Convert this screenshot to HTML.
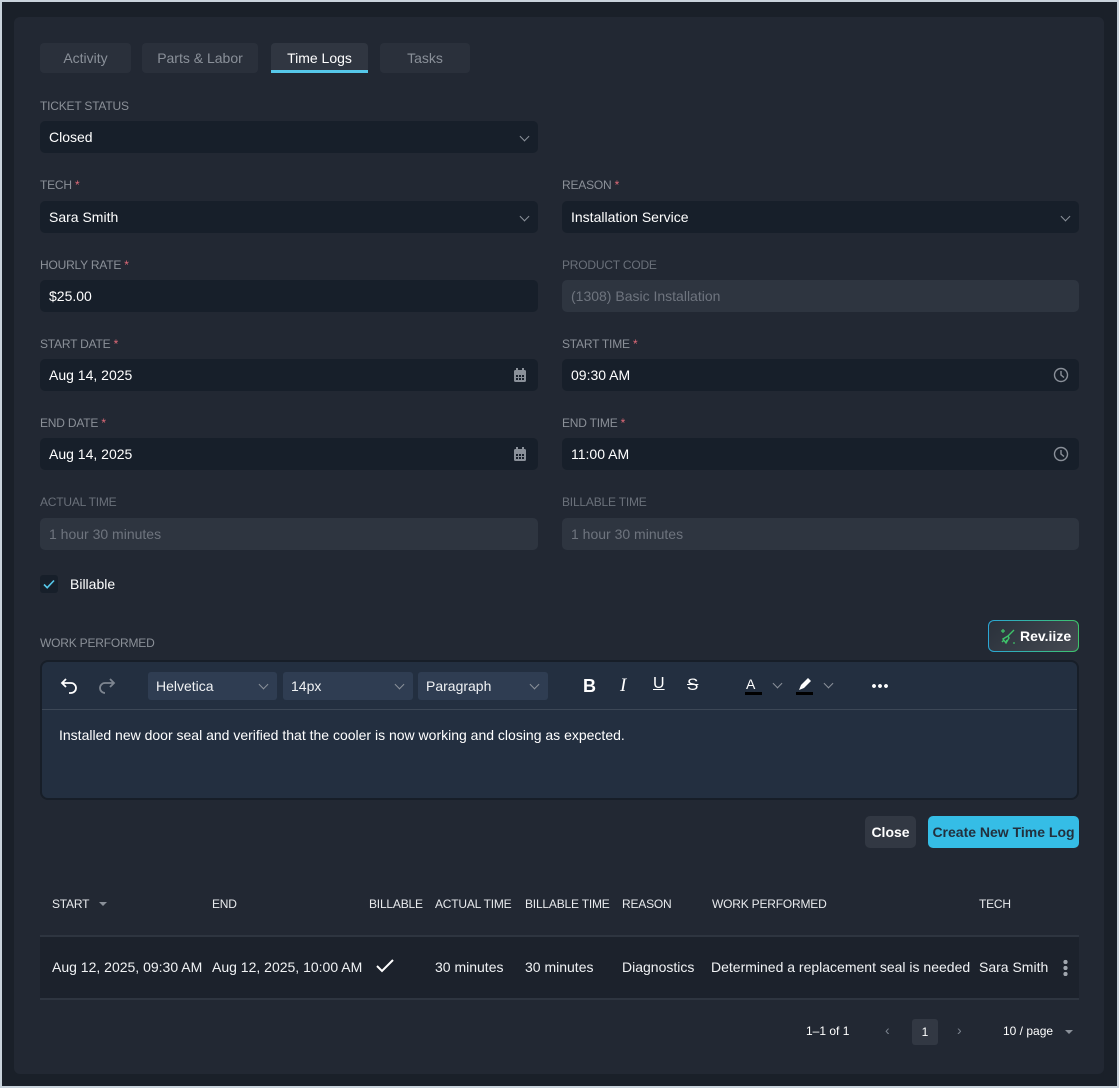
<!DOCTYPE html>
<html><head><meta charset="utf-8"><style>
*{box-sizing:border-box;margin:0;padding:0}
body{width:1119px;height:1088px;background:#c9d3dc;font-family:"Liberation Sans",sans-serif;position:relative;overflow:hidden}
.frame{position:absolute;left:2px;top:2px;width:1115px;height:1084px;background:#1a2029}
.card{position:absolute;left:14px;top:17px;width:1090px;height:1057px;background:#222833;border-radius:6px}
.a{position:absolute}
.tab{position:absolute;top:43px;height:30px;background:#2a303b;border-radius:4px;color:#8a9099;font-size:14px;text-align:center;line-height:30px}
.lbl{position:absolute;font-size:12px;color:#8b9098;letter-spacing:-0.2px}
.lbl.dis{color:#6a707a}
.req{color:#e06a78}
.inp{position:absolute;height:32px;background:#171f2a;border-radius:5px;color:#fff;font-size:14px;line-height:32px;padding-left:9px}
.inp.dis{background:#2e3540;color:#6e747e}
.chev{position:absolute;right:10px;top:12px;width:7px;height:7px;border-right:1.5px solid #8a9099;border-bottom:1.5px solid #8a9099;transform:rotate(45deg)}
.th{position:absolute;top:897px;font-size:12px;color:#e8eaed;letter-spacing:-0.2px}
.td{position:absolute;top:959px;font-size:14px;color:#f0f2f4}
.sel{position:absolute;top:672px;height:28px;background:#2f3d52;border-radius:3px;color:#f0f2f4;font-size:14px;line-height:28px;padding-left:8px}
.sel .chev{top:9px}
</style></head><body>
<div class="frame"></div>
<div class="card"></div>

<div class="tab" style="left:40px;width:91px">Activity</div>
<div class="tab" style="left:142px;width:116px">Parts &amp; Labor</div>
<div class="tab" style="left:271px;width:97px;background:#303641;color:#fff">Time Logs<div class="a" style="left:0;bottom:0;width:97px;height:3px;background:#56c8ea"></div></div>
<div class="tab" style="left:380px;width:90px">Tasks</div>

<div class="lbl" style="left:40px;top:99px">TICKET STATUS</div>
<div class="inp" style="left:40px;top:121px;width:498px">Closed<div class="chev"></div></div>

<div class="lbl" style="left:40px;top:178px">TECH <span class="req">*</span></div>
<div class="inp" style="left:40px;top:201px;width:498px">Sara Smith<div class="chev"></div></div>
<div class="lbl" style="left:562px;top:178px">REASON <span class="req">*</span></div>
<div class="inp" style="left:562px;top:201px;width:517px">Installation Service<div class="chev"></div></div>

<div class="lbl" style="left:40px;top:258px">HOURLY RATE <span class="req">*</span></div>
<div class="inp" style="left:40px;top:280px;width:498px">$25.00</div>
<div class="lbl dis" style="left:562px;top:258px">PRODUCT CODE</div>
<div class="inp dis" style="left:562px;top:280px;width:517px">(1308) Basic Installation</div>

<div class="lbl" style="left:40px;top:337px">START DATE <span class="req">*</span></div>
<div class="inp" style="left:40px;top:359px;width:498px">Aug 14, 2025
<svg class="a" style="right:11px;top:9px" width="14" height="15" viewBox="0 0 14 15"><rect x="1" y="2" width="12" height="12" rx="1.5" fill="#8a9099"/><rect x="3" y="0" width="2" height="3" fill="#8a9099"/><rect x="9" y="0" width="2" height="3" fill="#8a9099"/><g fill="#171f2a"><rect x="3" y="7" width="2" height="2"/><rect x="6" y="7" width="2" height="2"/><rect x="9" y="7" width="2" height="2"/><rect x="3" y="10" width="2" height="2"/><rect x="6" y="10" width="2" height="2"/><rect x="9" y="10" width="2" height="2"/></g></svg></div>
<div class="lbl" style="left:562px;top:337px">START TIME <span class="req">*</span></div>
<div class="inp" style="left:562px;top:359px;width:517px">09:30 AM
<svg class="a" style="right:10px;top:8px" width="16" height="16" viewBox="0 0 16 16"><circle cx="8" cy="8" r="6.5" fill="none" stroke="#8a9099" stroke-width="1.4"/><path d="M8 4v4l3 2.5" fill="none" stroke="#8a9099" stroke-width="1.4"/></svg></div>

<div class="lbl" style="left:40px;top:416px">END DATE <span class="req">*</span></div>
<div class="inp" style="left:40px;top:438px;width:498px">Aug 14, 2025
<svg class="a" style="right:11px;top:9px" width="14" height="15" viewBox="0 0 14 15"><rect x="1" y="2" width="12" height="12" rx="1.5" fill="#8a9099"/><rect x="3" y="0" width="2" height="3" fill="#8a9099"/><rect x="9" y="0" width="2" height="3" fill="#8a9099"/><g fill="#171f2a"><rect x="3" y="7" width="2" height="2"/><rect x="6" y="7" width="2" height="2"/><rect x="9" y="7" width="2" height="2"/><rect x="3" y="10" width="2" height="2"/><rect x="6" y="10" width="2" height="2"/><rect x="9" y="10" width="2" height="2"/></g></svg></div>
<div class="lbl" style="left:562px;top:416px">END TIME <span class="req">*</span></div>
<div class="inp" style="left:562px;top:438px;width:517px">11:00 AM
<svg class="a" style="right:10px;top:8px" width="16" height="16" viewBox="0 0 16 16"><circle cx="8" cy="8" r="6.5" fill="none" stroke="#8a9099" stroke-width="1.4"/><path d="M8 4v4l3 2.5" fill="none" stroke="#8a9099" stroke-width="1.4"/></svg></div>

<div class="lbl dis" style="left:40px;top:495px">ACTUAL TIME</div>
<div class="inp dis" style="left:40px;top:518px;width:498px">1 hour 30 minutes</div>
<div class="lbl dis" style="left:562px;top:495px">BILLABLE TIME</div>
<div class="inp dis" style="left:562px;top:518px;width:517px">1 hour 30 minutes</div>

<div class="a" style="left:40px;top:575px;width:18px;height:18px;background:#171f2a;border-radius:3px"></div>
<svg class="a" style="left:42px;top:577px" width="14" height="14" viewBox="0 0 14 14"><path d="M2 7.5l3.2 3.2L12 3.5" fill="none" stroke="#56c8ea" stroke-width="1.6"/></svg>
<div class="a" style="left:70px;top:576px;font-size:14px;color:#fff">Billable</div>

<div class="lbl" style="left:40px;top:636px">WORK PERFORMED</div>
<div class="a" style="left:988px;top:620px;width:91px;height:32px;border-radius:6px;background:linear-gradient(90deg,#2ba7d6,#3ec36a);padding:1px">
<div style="width:100%;height:100%;border-radius:5px;background:linear-gradient(135deg,#2a313b,#454a52);color:#fff;font-weight:bold;font-size:14px;line-height:30px;padding-left:31px;position:relative">Rev.iize
<svg class="a" style="left:10px;top:7px" width="17" height="17" viewBox="0 0 17 17"><path d="M15 2l-6 6M9 8l-5 3 3 4 3-5z M5 12l-2 2M7 14l1-2" fill="none" stroke="#3ec36a" stroke-width="1.4"/><path d="M4 1v4M2 3h4" stroke="#3ec36a" stroke-width="1.2"/><circle cx="15" cy="15" r="0.9" fill="#3ec36a"/></svg></div></div>

<div class="a" style="left:40px;top:660px;width:1039px;height:140px;background:#232f40;border:2px solid #171e28;border-radius:8px"></div>
<div class="a" style="left:42px;top:709px;width:1035px;height:1px;background:#3c4756"></div>
<svg class="a" style="left:60px;top:676px" width="20" height="20" viewBox="0 0 20 20"><path d="M6 3L2 7l4 4M2 7h9a5 5 0 0 1 0 10H9" fill="none" stroke="#fff" stroke-width="1.8"/></svg>
<svg class="a" style="left:96px;top:676px" width="20" height="20" viewBox="0 0 20 20"><path d="M14 3l4 4-4 4M18 7H9a5 5 0 0 0 0 10" fill="none" stroke="#7d8590" stroke-width="1.8"/></svg>
<div class="sel" style="left:148px;width:129px">Helvetica<div class="chev"></div></div>
<div class="sel" style="left:283px;width:130px">14px<div class="chev"></div></div>
<div class="sel" style="left:418px;width:130px">Paragraph<div class="chev"></div></div>
<div class="a" style="left:583px;top:676px;font-size:18px;font-weight:bold;color:#fff">B</div>
<div class="a" style="left:620px;top:675px;font-size:19px;font-style:italic;font-family:'Liberation Serif',serif;color:#fff">I</div>
<div class="a" style="left:653px;top:675px;font-size:16px;color:#fff;text-decoration:underline">U</div>
<div class="a" style="left:687px;top:675px;font-size:17px;color:#fff;text-decoration:line-through">S</div>
<div class="a" style="left:746px;top:676px;font-size:14px;color:#fff">A</div>
<div class="a" style="left:745px;top:692px;width:17px;height:3px;background:#000"></div>
<div class="chev" style="left:774px;top:680px;right:auto"></div>
<svg class="a" style="left:796px;top:676px" width="18" height="16" viewBox="0 0 18 16"><path d="M3 14l2-5 7-7 3 3-7 7z" fill="#fff"/></svg>
<div class="a" style="left:796px;top:692px;width:17px;height:3px;background:#000"></div>
<div class="chev" style="left:825px;top:680px;right:auto"></div>
<div class="a" style="left:871px;top:684px;width:18px;height:4px;background:radial-gradient(circle,#fff 1.8px,transparent 2px) 0 0/6px 4px"></div>
<div class="a" style="left:59px;top:727px;font-size:14px;color:#fff">Installed new door seal and verified that the cooler is now working and closing as expected.</div>

<div class="a" style="left:865px;top:816px;width:51px;height:32px;background:#323843;border-radius:5px;color:#fff;font-weight:bold;font-size:14px;text-align:center;line-height:32px">Close</div>
<div class="a" style="left:928px;top:816px;width:151px;height:32px;background:#35bde6;border-radius:5px;color:#22303d;font-weight:bold;font-size:14px;text-align:center;line-height:32px">Create New Time Log</div>

<div class="th" style="left:52px">START</div>
<div class="a" style="left:99px;top:902px;border:4px solid transparent;border-top:4px solid #8a9099"></div>
<div class="th" style="left:212px">END</div>
<div class="th" style="left:369px">BILLABLE</div>
<div class="th" style="left:435px">ACTUAL TIME</div>
<div class="th" style="left:525px">BILLABLE TIME</div>
<div class="th" style="left:622px">REASON</div>
<div class="th" style="left:712px">WORK PERFORMED</div>
<div class="th" style="left:979px">TECH</div>
<div class="a" style="left:40px;top:935px;width:1039px;height:65px;background:#1c222c;border-top:2px solid #2e3540;border-bottom:2px solid #2e3540"></div>
<div class="td" style="left:52px">Aug 12, 2025, 09:30 AM</div>
<div class="td" style="left:212px">Aug 12, 2025, 10:00 AM</div>
<svg class="a" style="left:375px;top:958px" width="20" height="16" viewBox="0 0 20 16"><path d="M2 8l5 5L18 2" fill="none" stroke="#fff" stroke-width="2"/></svg>
<div class="td" style="left:435px">30 minutes</div>
<div class="td" style="left:525px">30 minutes</div>
<div class="td" style="left:622px">Diagnostics</div>
<div class="td" style="left:711px">Determined a replacement seal is needed</div>
<div class="td" style="left:979px">Sara Smith</div>
<div class="a" style="left:1063px;top:959px;width:5px;height:17px;background:radial-gradient(circle,#a0a6ae 2px,transparent 2.3px) 0 0/5px 6px"></div>

<div class="a" style="left:806px;top:1024px;font-size:12px;color:#fff">1–1 of 1</div>
<div class="a" style="left:885px;top:1022px;font-size:14px;color:#7d8590">‹</div>
<div class="a" style="left:912px;top:1019px;width:26px;height:26px;background:#323843;border-radius:3px;color:#fff;font-size:12px;text-align:center;line-height:26px">1</div>
<div class="a" style="left:957px;top:1022px;font-size:14px;color:#7d8590">›</div>
<div class="a" style="left:1003px;top:1024px;font-size:12px;color:#fff">10 / page</div>
<div class="a" style="left:1065px;top:1030px;border:4px solid transparent;border-top:4px solid #8a9099"></div>
</body></html>
